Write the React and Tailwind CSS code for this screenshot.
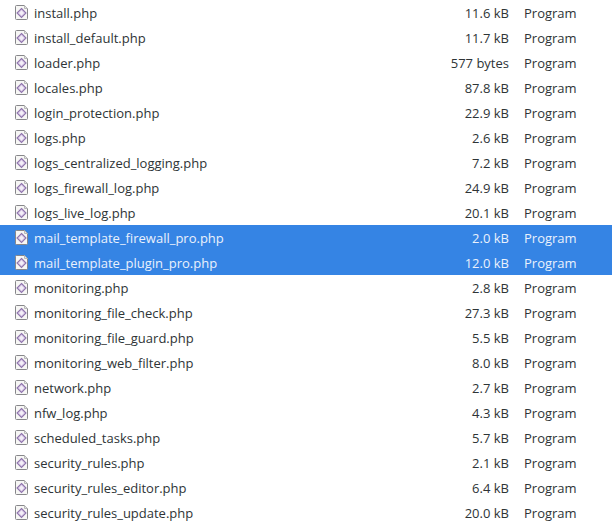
const rows = [
  ["install.php", "11.6 kB"],
  ["install_default.php", "11.7 kB"],
  ["loader.php", "577 bytes"],
  ["locales.php", "87.8 kB"],
  ["login_protection.php", "22.9 kB"],
  ["logs.php", "2.6 kB"],
  ["logs_centralized_logging.php", "7.2 kB"],
  ["logs_firewall_log.php", "24.9 kB"],
  ["logs_live_log.php", "20.1 kB"],
  ["mail_template_firewall_pro.php", "2.0 kB", true],
  ["mail_template_plugin_pro.php", "12.0 kB", true],
  ["monitoring.php", "2.8 kB"],
  ["monitoring_file_check.php", "27.3 kB"],
  ["monitoring_file_guard.php", "5.5 kB"],
  ["monitoring_web_filter.php", "8.0 kB"],
  ["network.php", "2.7 kB"],
  ["nfw_log.php", "4.3 kB"],
  ["scheduled_tasks.php", "5.7 kB"],
  ["security_rules.php", "2.1 kB"],
  ["security_rules_editor.php", "6.4 kB"],
  ["security_rules_update.php", "20.0 kB"],
];

function FileIcon() {
  return (
    <svg width="13" height="15" viewBox="0 0 13 15" className="block">
      <path d="M1.5 0.5H9.5L12.5 3.5V13.5Q12.5 14.5 11.5 14.5H1.5Q0.5 14.5 0.5 13.5V1.5Q0.5 0.5 1.5 0.5Z" fill="#f7f7f5" stroke="#87878a" />
      <path d="M9.5 0.5V3.5H12.5" fill="#e6e6e6" stroke="#b8b8b8" />
      <path d="M6.5 3.5L11 8L6.5 12.5L2 8Z" fill="#dccfe8" stroke="#8f74ad" strokeWidth="1.1" />
      <path d="M6.5 5.6L8.9 8L6.5 10.4L4.1 8Z" fill="#f3eef7" />
    </svg>
  );
}

export default function App() {
  return (
    <div className="w-[612px] h-[527px] overflow-hidden bg-white font-['Open_Sans','Noto_Sans',sans-serif] text-[13px]">
      {rows.map(([name, size, sel]) => (
        <div
          key={name}
          className={`flex items-center h-[25px] pt-[2px] pr-[15px] ${sel ? "bg-[#3584e4] text-[#eaf1fc]" : "text-[#2e3436]"}`}
        >
          <div className="ml-[15px] w-[19px] -mt-[2px] shrink-0">
            <FileIcon />
          </div>
          <div className="flex-1 truncate">{name}</div>
          <div className="w-[100px] text-right shrink-0">{size}</div>
          <div className="w-[88px] pl-[15px] shrink-0">Program</div>
        </div>
      ))}
    </div>
  );
}
